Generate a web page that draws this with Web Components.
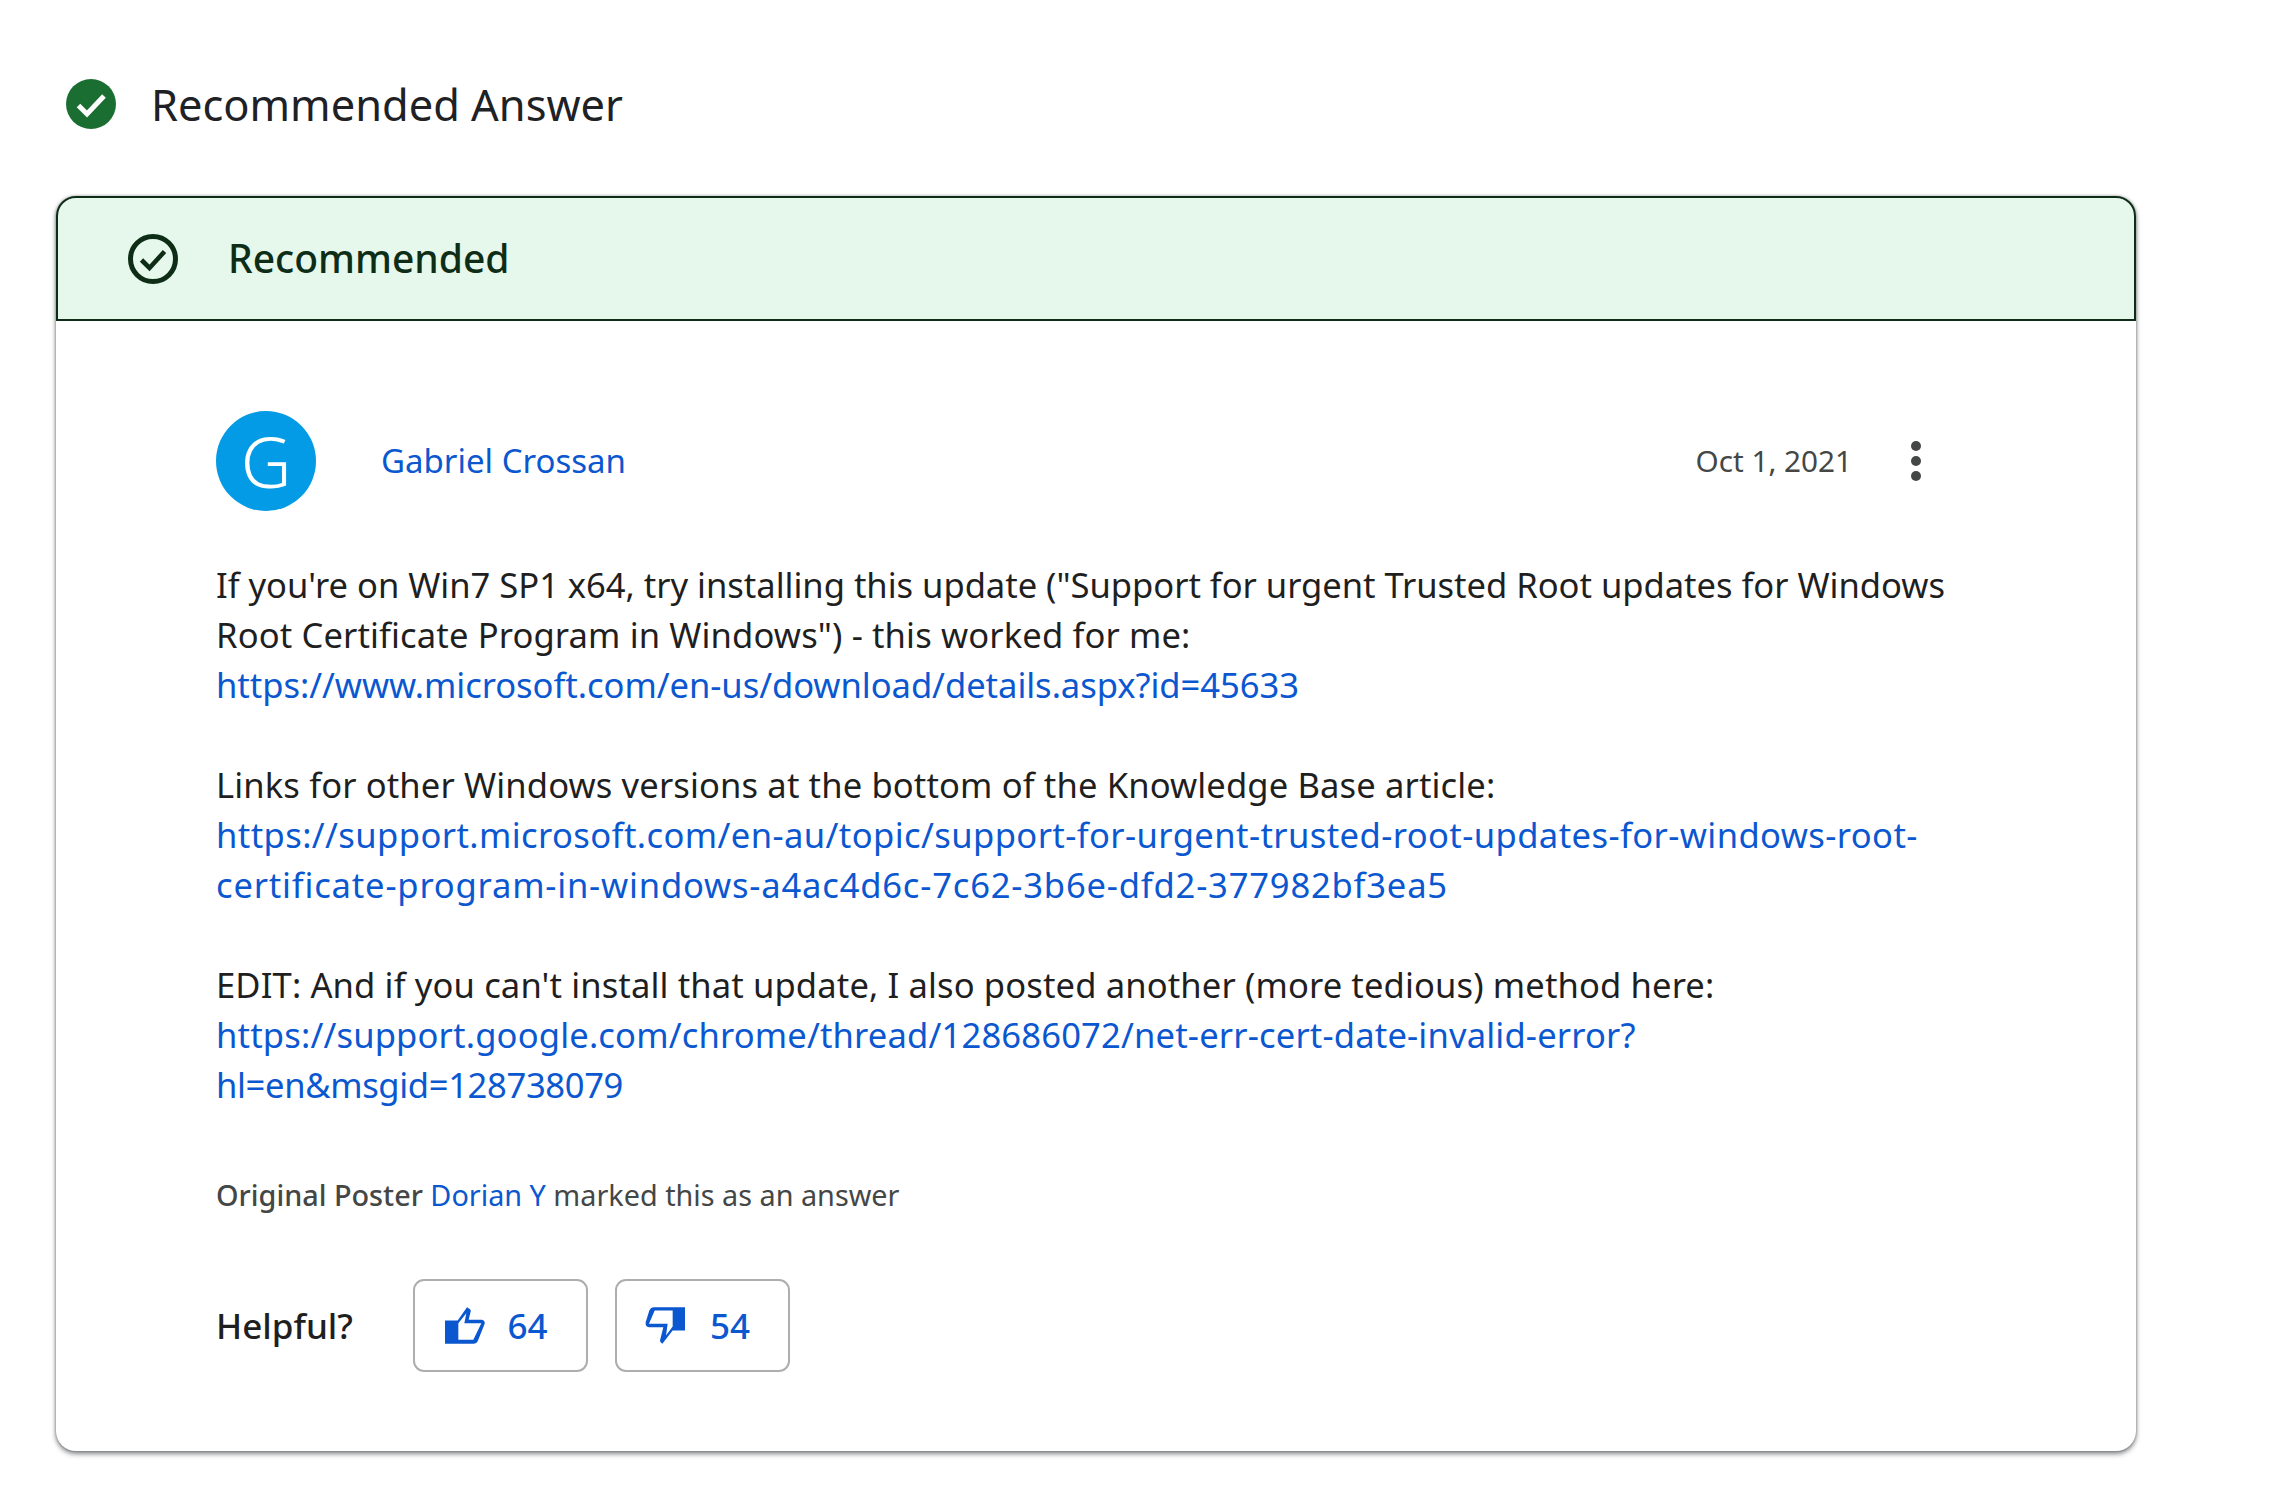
<!DOCTYPE html>
<html>
<head>
<meta charset="utf-8">
<title>Recommended Answer</title>
<style>
  html, body { margin: 0; background: #fff; }
  body { font-family: "Noto Sans", Roboto, sans-serif; min-height: 1487px; }
</style>
</head>
<body>
<answer-page>
  <answer-title>Recommended Answer</answer-title>
  <answer-card>
    <post-author name="Gabriel Crossan" date="Oct 1, 2021"></post-author>
    <post-body>
      <p><span style="letter-spacing:-.03px">If you're on Win7 SP1 x64, try installing this update ("Support for urgent Trusted Root updates for Windows</span> Root Certificate Program in Windows") - this worked for me:<br><post-link style="letter-spacing:-.05px">https://www.microsoft.com/en-us/download/details.aspx?id=45633</post-link></p>
      <p>Links for other Windows versions at the bottom of the Knowledge Base article:<br><post-link style="letter-spacing:.4px">https://support.microsoft.com/en-au/topic/support-for-urgent-trusted-root-updates-for-windows-root-<span style="letter-spacing:.8px">certificate-program-in-windows-a4ac4d6c-7c62-3b6e-dfd2-377982bf3ea5</span></post-link></p>
      <p>EDIT: And if you can't install that update, I also posted another (more tedious) method here:<br><post-link style="letter-spacing:.16px">https://support.google.com/chrome/thread/128686072/net-err-cert-date-invalid-error?<wbr><span style="letter-spacing:-.35px">hl=en&amp;msgid=128738079</span></post-link></p>
    </post-body>
    <answer-mark poster="Dorian Y"></answer-mark>
    <helpful-bar up="64" down="54"></helpful-bar>
  </answer-card>
</answer-page>
<script>
class AnswerPage extends HTMLElement {
  constructor() {
    super();
    this.attachShadow({ mode: 'open' });
    this.shadowRoot.innerHTML = `
      <style>
        :host { display: flex; flex-direction: column; width: 2080px; padding: 64px 0 30px 56px; }
      </style>
      <slot></slot>`;
  }
}

class AnswerTitle extends HTMLElement {
  constructor() {
    super();
    this.attachShadow({ mode: 'open' });
    this.shadowRoot.innerHTML = `
      <style>
        :host { display: flex; align-items: center; height: 80px; margin-bottom: 52px; padding-left: 10px; gap: 35px; color: #202124; font-size: 43.4px; }
        svg { width: 50px; height: 50px; }
      </style>
      <svg viewBox="0 0 50 50"><circle cx="25" cy="25" r="25" fill="#1b6e31"/><path d="M12.500 26.500l8.500 8.500 17-18" fill="none" stroke="#fff" stroke-width="5"/></svg>
      <span><slot></slot></span>`;
  }
}

class AnswerCard extends HTMLElement {
  constructor() {
    super();
    this.attachShadow({ mode: 'open' });
    this.shadowRoot.innerHTML = `
      <style>
        :host { display: block; border-radius: 20px; background: #fff; box-shadow: 0 3px 5px rgba(60,64,67,.6), 0 0 3px rgba(60,64,67,.5); }
        header { display: flex; align-items: center; gap: 50px; box-sizing: border-box; height: 125px; padding: 0 0 2px 70px; background: #e6f7ec; border: 2px solid #0d2d17; border-radius: 20px 20px 0 0; color: #0d2d17; font-size: 39px; font-weight: 500; }
        svg { width: 50px; height: 50px; margin-top: 2px; }
        main { padding: 90px 176px 79px 160px; }
      </style>
      <header>
        <svg viewBox="0 0 50 50"><circle cx="25" cy="25" r="22.500" fill="none" stroke="#0d2d17" stroke-width="5"/><path d="M13.500 26l8 8 15-16.500" fill="none" stroke="#0d2d17" stroke-width="4.600"/></svg>
        <span>Recommended</span>
      </header>
      <main><slot></slot></main>`;
  }
}

class PostAuthor extends HTMLElement {
  constructor() {
    super();
    this.attachShadow({ mode: 'open' });
    this.shadowRoot.innerHTML = `
      <style>
        :host { display: flex; align-items: center; height: 100px; margin-bottom: 49px; font-size: 33px; }
        .avatar { display: flex; align-items: center; justify-content: center; flex: none; width: 100px; height: 100px; border-radius: 50%; background: #039be5; color: #fff; font-size: 70px; font-weight: 350; }
        .name { margin-left: 65px; margin-top: -2px; color: #0b57d0; }
        .date { margin-left: auto; margin-top: -2px; color: #444746; font-size: 29.700px; }
        .more { display: flex; flex-direction: column; gap: 5px; margin: 0 39px 0 59px; }
        .more i { width: 10px; height: 10px; border-radius: 50%; background: #444746; }
      </style>
      <span class="avatar"></span>
      <span class="name"></span>
      <span class="date"></span>
      <span class="more"><i></i><i></i><i></i></span>`;
  }

  connectedCallback() {
    this.shadowRoot.querySelector('.avatar').textContent = this.getAttribute('name')[0];
    this.shadowRoot.querySelector('.name').textContent = this.getAttribute('name');
    this.shadowRoot.querySelector('.date').textContent = this.getAttribute('date');
  }
}

class PostBody extends HTMLElement {
  constructor() {
    super();
    this.attachShadow({ mode: 'open' });
    this.shadowRoot.innerHTML = `
      <style>
        :host { display: block; color: #1f1f1f; font-size: 34.6px; line-height: 50px; letter-spacing: .12px; }
        ::slotted(p) { margin: 0 0 50px; }
      </style>
      <slot></slot>`;
  }
}

class PostLink extends HTMLElement {
  constructor() {
    super();
    this.attachShadow({ mode: 'open' });
    this.shadowRoot.innerHTML = `
      <style>
        :host { color: #0b57d0; cursor: pointer; }
      </style>
      <slot></slot>`;
  }
}

class AnswerMark extends HTMLElement {
  constructor() {
    super();
    this.attachShadow({ mode: 'open' });
    this.shadowRoot.innerHTML = `
      <style>
        :host { display: block; margin-top: 60px; color: #444746; font-size: 28.800px; line-height: 50px; }
        b { font-weight: 500; }
        a { color: #0b57d0; }
      </style>
      <b>Original Poster</b> <a></a> marked this as an answer`;
  }

  connectedCallback() {
    this.shadowRoot.querySelector('a').textContent = this.getAttribute('poster');
  }
}

class HelpfulBar extends HTMLElement {
  constructor() {
    super();
    this.attachShadow({ mode: 'open' });
    this.shadowRoot.innerHTML = `
      <style>
        :host { display: flex; align-items: center; gap: 27px; margin-top: 59px; color: #1f1f1f; font-size: 35px; font-weight: 500; }
        .label { width: 170px; }
        button { display: flex; align-items: center; justify-content: center; gap: 22px; box-sizing: border-box; width: 175px; height: 93px; padding: 0 8px 0 0; background: #fff; border: 2px solid #aeaeae; border-radius: 11px; color: #0b57d0; font: inherit; font-size: 35px; }
        button.down { gap: 25px; padding-right: 10px; }
        svg { width: 40px; height: 37px; }
      </style>
      <span class="label">Helpful?</span>
      <button>
        <svg viewBox="47 52 120 110"><path fill="#0b57d0" fill-rule="evenodd" d="M47 92H85L113 52l9 6q3 3 2 7l-6 25h40q10 2 8 12l-20 50q-4 10-14 10H47ZM87 150H132l24-50H105l6-30-24 30Z"/></svg>
        <span id="up"></span>
      </button>
      <button class="down">
        <svg viewBox="45 50 120 110"><path fill="#0b57d0" fill-rule="evenodd" d="M165 50H72q-10 0-14 10L47 95q-2 13 10 15h43l-10 40q0 5 7 10l31-40h37ZM128 60H74L57 100h56l-5 35 20-27Z"/></svg>
        <span id="down"></span>
      </button>`;
  }

  connectedCallback() {
    this.shadowRoot.getElementById('up').textContent = this.getAttribute('up');
    this.shadowRoot.getElementById('down').textContent = this.getAttribute('down');
  }
}

customElements.define('answer-page', AnswerPage);
customElements.define('answer-title', AnswerTitle);
customElements.define('answer-card', AnswerCard);
customElements.define('post-author', PostAuthor);
customElements.define('post-body', PostBody);
customElements.define('post-link', PostLink);
customElements.define('answer-mark', AnswerMark);
customElements.define('helpful-bar', HelpfulBar);
</script>
</body>
</html>
